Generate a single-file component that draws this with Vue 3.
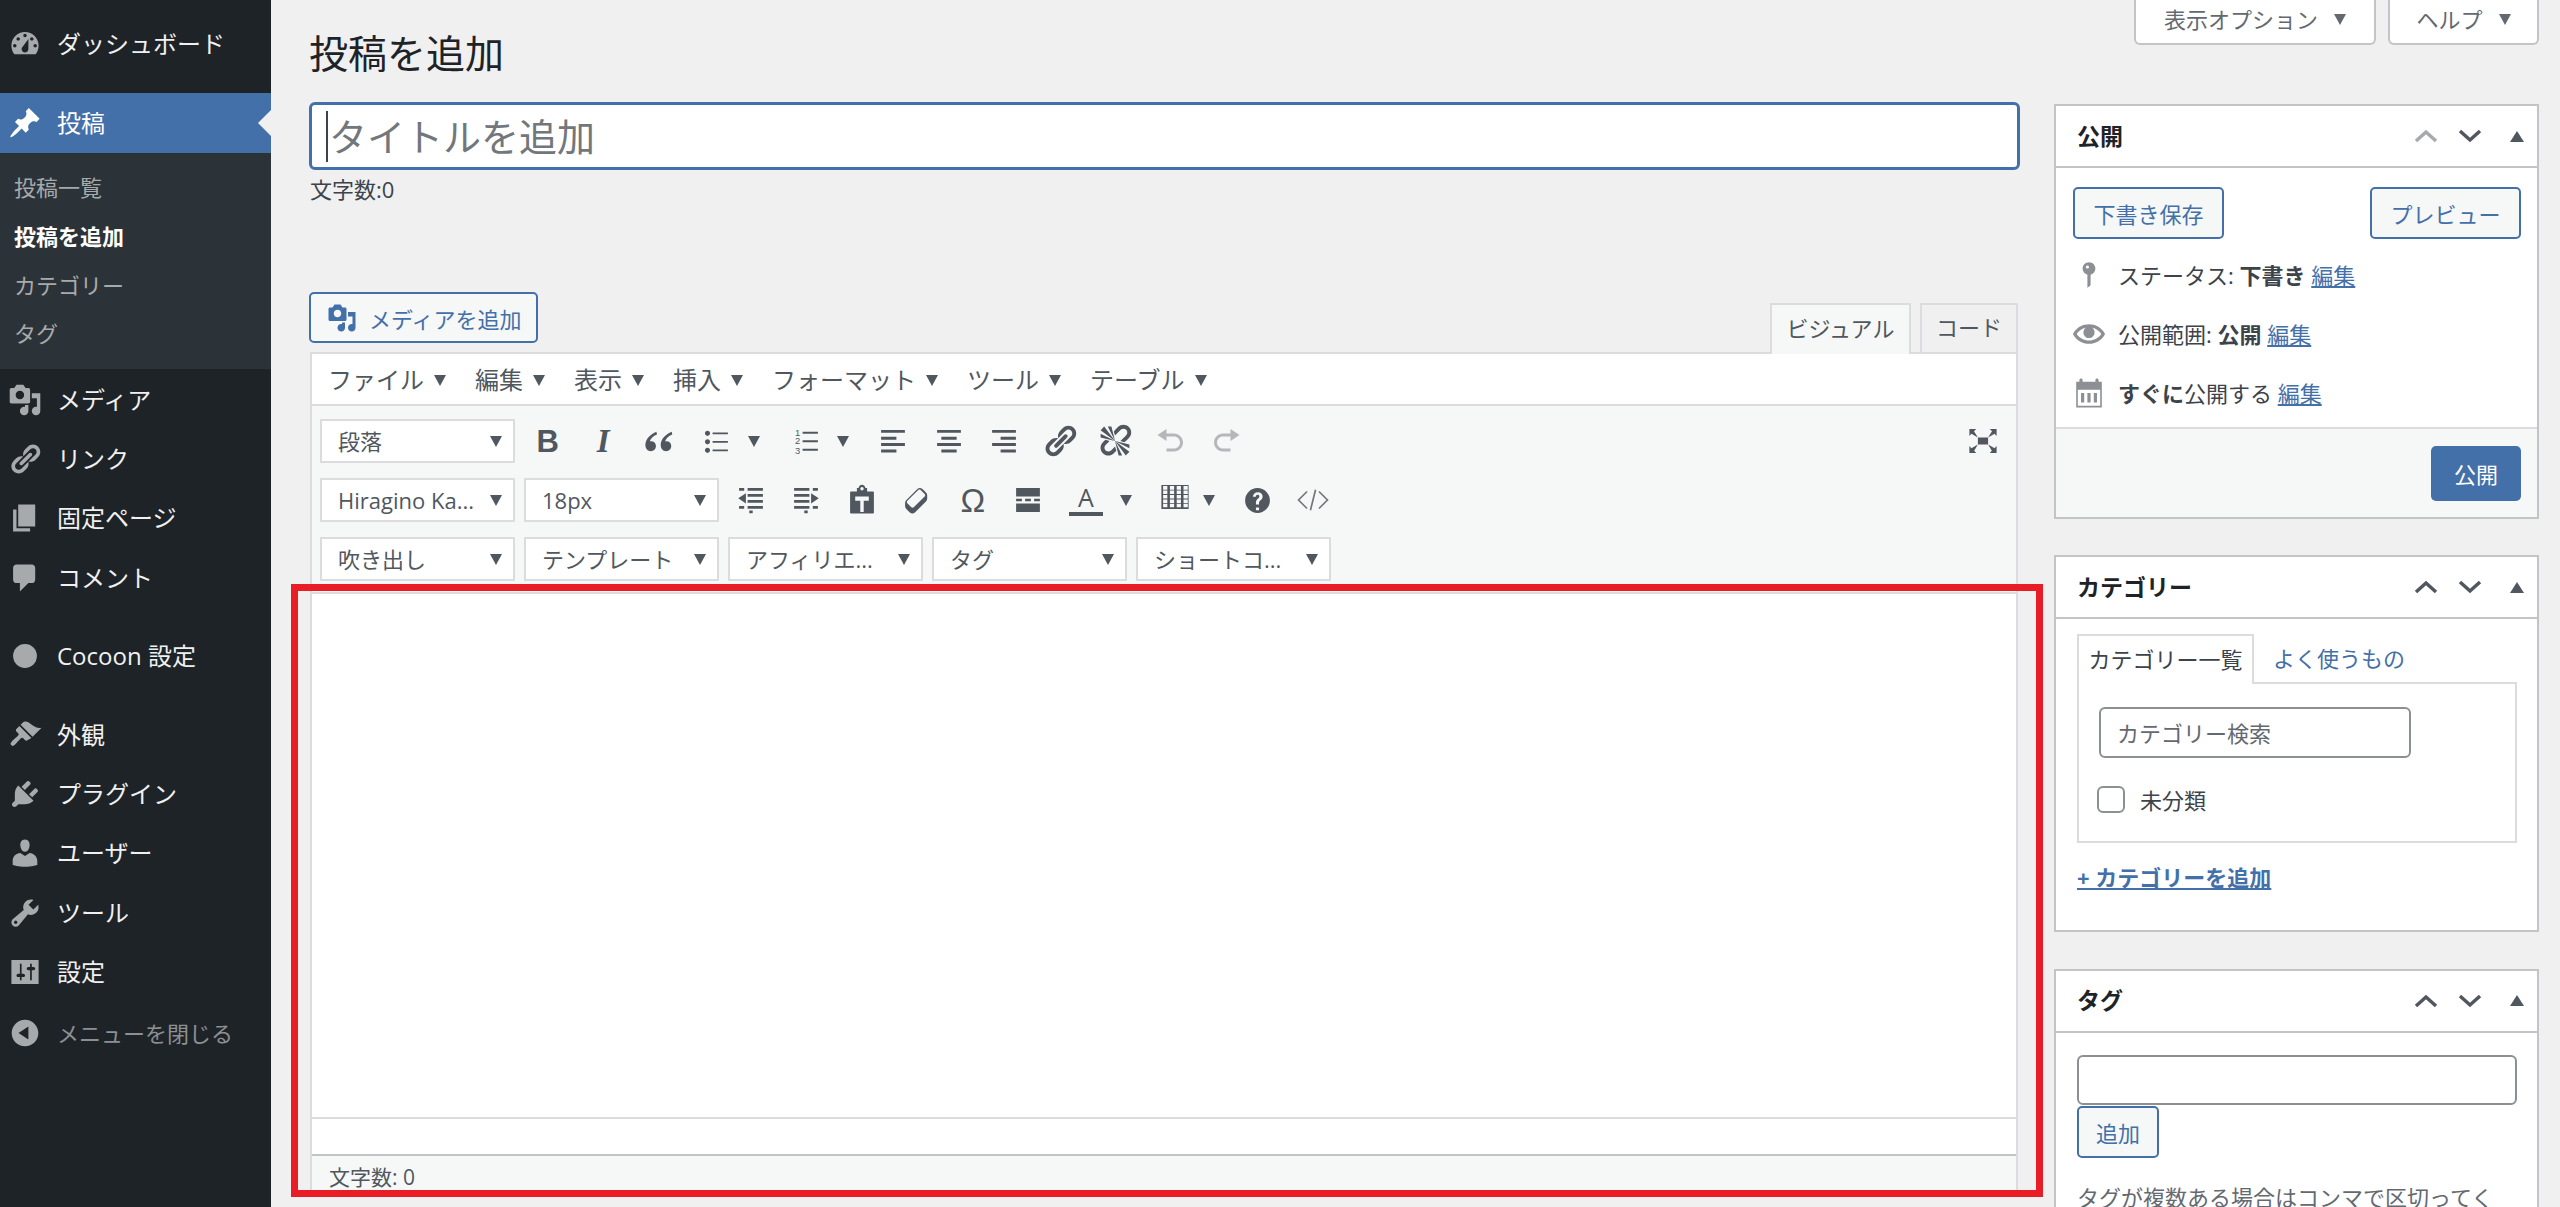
<script setup>
const icons = {
  dashboard: 'M3.76 16h12.48c1.1-1.37 1.76-3.11 1.76-5 0-4.42-3.58-8-8-8s-8 3.58-8 8c0 1.89.66 3.63 1.76 5zM10 4c.55 0 1 .45 1 1s-.45 1-1 1-1-.45-1-1 .45-1 1-1zM6 6c.55 0 1 .45 1 1s-.45 1-1 1-1-.45-1-1 .45-1 1-1zm8 0c.55 0 1 .45 1 1s-.45 1-1 1-1-.45-1-1 .45-1 1-1zm-5.37 5.55L12 7v6c0 1.1-.9 2-2 2s-2-.9-2-2c0-.57.24-1.08.63-1.45zM4 10c.55 0 1 .45 1 1s-.45 1-1 1-1-.45-1-1 .45-1 1-1zm12 0c.55 0 1 .45 1 1s-.45 1-1 1-1-.45-1-1 .45-1 1-1z',
  pin: 'M10.44 3.02l1.82-1.82 6.36 6.35-1.83 1.82c-1.05-.68-2.48-.57-3.41.36l-.75.75c-.92.93-1.04 2.35-.35 3.41l-1.83 1.82-2.41-2.41-2.8 2.79c-.42.42-3.38 2.71-3.8 2.29s1.86-3.39 2.28-3.81l2.79-2.79L4.1 9.36l1.83-1.82c1.05.69 2.48.57 3.4-.36l.75-.75c.93-.92 1.05-2.35.36-3.41z',
  media: 'M13 11V4c0-.55-.45-1-1-1h-1.67L9 1H5L3.67 3H2c-.55 0-1 .45-1 1v7c0 .55.45 1 1 1h10c.55 0 1-.45 1-1zM7 4.5c1.38 0 2.5 1.12 2.5 2.5S8.38 9.5 7 9.5 4.5 8.38 4.5 7 5.62 4.5 7 4.5zM14 6h5v10.5c0 1.38-1.12 2.5-2.5 2.5S14 17.88 14 16.5s1.12-2.5 2.5-2.5c.17 0 .34.02.5.05V9h-3V6zm-4 8.05V13h2v3.5c0 1.38-1.12 2.5-2.5 2.5S7 17.88 7 16.5 8.12 14 9.5 14c.17 0 .34.02.5.05z',
  link: 'M17.74 2.76c1.68 1.69 1.68 4.41 0 6.1l-1.53 1.52c-1.12 1.12-2.7 1.47-4.14 1.09l2.62-2.61.76-.77.76-.76c.84-.84.84-2.2 0-3.04-.84-.85-2.2-.85-3.04 0l-.77.76-3.38 3.38c-.37-1.44-.02-3.02 1.1-4.14l1.52-1.53c1.69-1.68 4.42-1.68 6.1 0zM8.59 13.43l5.34-5.34c.42-.42.42-1.1 0-1.52-.44-.43-1.13-.39-1.53 0l-5.33 5.34c-.42.42-.42 1.1 0 1.52.44.43 1.13.39 1.52 0zm-.76 2.29l4.14-4.15c.38 1.44.03 3.02-1.09 4.14l-1.52 1.53c-1.69 1.68-4.41 1.68-6.1 0-1.68-1.68-1.68-4.42 0-6.1l1.53-1.52c1.12-1.12 2.7-1.47 4.14-1.1l-4.14 4.15c-.85.84-.85 2.2 0 3.05.84.84 2.2.84 3.04 0z',
  page: 'M6 15V2h10v13H6zm-1 1h8v2H3V5h2v11z',
  comment: 'M5 2h9c1.1 0 2 .9 2 2v7c0 1.1-.9 2-2 2h-2l-5 5v-5H5c-1.1 0-2-.9-2-2V4c0-1.1.9-2 2-2z',
  circle: 'M10 3a7 7 0 1 0 0 14a7 7 0 1 0 0-14z',
  brush: 'M14.48 11.06L7.41 3.99l1.5-1.5c.5-.56 2.3-.47 3.51.32 1.21.8 1.43 1.28 2.91 2.1 1.18.64 2.45 1.26 4.45.85zm-.71.71L6.7 4.7 4.93 6.47c-.39.39-.39 1.02 0 1.41l1.06 1.06c.39.39.39 1.03 0 1.42-.6.6-3.01 2.7-3.71 3.4-1 1-.9 1.6-.3 2.2.6.6 1.2.7 2.2-.3.7-.7 2.8-3.1 3.4-3.7.39-.39 1.03-.39 1.42 0l1.06 1.06c.39.39 1.02.39 1.41 0z',
  plugin: 'M13.11 4.36L9.87 7.6 8 5.73l3.24-3.24c.35-.34 1.05-.2 1.56.32.52.51.66 1.21.31 1.55zm-8 1.77l.91-1.12 9.01 9.01-1.19.84c-.71.71-2.63 1.16-3.82 1.16H6.14L4.9 17.26c-.59.59-1.54.59-2.12 0-.59-.58-.59-1.53 0-2.12l1.24-1.24v-3.88c0-1.13.4-3.19 1.09-3.89zm7.26 3.97l3.24-3.24c.34-.35 1.04-.21 1.55.31.52.51.66 1.21.31 1.55l-3.24 3.25z',
  user: 'M10 9.25c-2.27 0-2.73-3.44-2.73-3.44C7 4.02 7.82 2 9.97 2c2.16 0 2.98 2.02 2.71 3.81 0 0-.41 3.44-2.68 3.44zm0 2.57L12.72 10c2.39 0 4.52 2.33 4.52 4.53v2.49s-3.65 1.13-7.24 1.13c-3.65 0-7.24-1.13-7.24-1.13v-2.49c0-2.25 1.94-4.48 4.47-4.48z',
  tool: 'M16.68 9.77c-1.34 1.34-3.3 1.67-4.95.99l-5.41 6.52c-.99.99-2.59.99-3.58 0s-.99-2.59 0-3.57l6.52-5.42c-.68-1.65-.35-3.61.99-4.95 1.28-1.28 3.12-1.62 4.72-1.06l-2.89 2.89 2.82 2.82 2.86-2.87c.53 1.58.18 3.39-1.08 4.65zM3.81 16.21c.4.39 1.04.39 1.43 0 .4-.4.4-1.04 0-1.43-.39-.4-1.03-.4-1.43 0-.39.39-.39 1.03 0 1.43z',
  settings: 'M18 3H2v14h16V3zM8 11h1c.55 0 1 .45 1 1s-.45 1-1 1H8v1.5c0 .28-.22.5-.5.5s-.5-.22-.5-.5V13H6c-.55 0-1-.45-1-1s.45-1 1-1h1V5.5c0-.28.22-.5.5-.5s.5.22.5.5V11zm5-2h-1c-.55 0-1-.45-1-1s.45-1 1-1h1V5.5c0-.28.22-.5.5-.5s.5.22.5.5V7h1c.55 0 1 .45 1 1s-.45 1-1 1h-1v5.5c0 .28-.22.5-.5.5s-.5-.22-.5-.5V9z',
  collapse: 'M10 2.16c4.33 0 7.84 3.51 7.84 7.84s-3.51 7.84-7.84 7.84S2.16 14.33 2.16 10 5.71 2.16 10 2.16zm2 11.72V6.12L6.18 9.97z',
  ul: 'M5 7C4.17 7 3.5 6.33 3.5 5.5 3.5 4.68 4.17 4 5 4c.82 0 1.5.68 1.5 1.5C6.5 6.33 5.82 7 5 7zM8 5h9v1H8V5zm-3 7c-.83 0-1.5-.67-1.5-1.5C3.5 9.68 4.17 9 5 9c.82 0 1.5.68 1.5 1.5 0 .83-.68 1.5-1.5 1.5zM8 10h9v1H8v-1zm-3 7c-.83 0-1.5-.67-1.5-1.5 0-.82.67-1.5 1.5-1.5.82 0 1.5.68 1.5 1.5 0 .83-.68 1.5-1.5 1.5zM8 15h9v1H8v-1z',
  alignLeft: 'M3 3.500h14v1.700H3zM3 7.500h9v1.700H3zM3 11.200h14v1.700H3zM3 15h9v1.700H3z',
  alignCenter: 'M3 3.500h14v1.700H3zM5.500 7.500h9v1.700h-9zM3 11.200h14v1.700H3zM5.500 15h9v1.700h-9z',
  alignRight: 'M3 3.500h14v1.700H3zM8 7.500h9v1.700H8zM3 11.200h14v1.700H3zM8 15h9v1.700H8z',
  unlink: 'M17.74 2.26c1.68 1.69 1.68 4.41 0 6.1l-1.53 1.52c-.32.33-.69.58-1.08.77L13 10l1.69-1.64.76-.77.76-.76c.84-.84.84-2.2 0-3.04-.84-.85-2.2-.85-3.04 0l-.77.76-.76.76L10 7l-.65-2.14c.19-.38.44-.75.77-1.07l1.52-1.53c1.69-1.68 4.42-1.68 6.1 0zM2 4l8 6-6-8zm4-2l4 8-2-8H6zM2 6l8 4-8-2V6zm7.36 7.69L10 13l.74 2.35-1.38 1.39c-1.69 1.68-4.41 1.68-6.1 0-1.68-1.68-1.68-4.42 0-6.1l1.39-1.38L7 10l-.69.64-1.52 1.53c-.85.84-.85 2.2 0 3.04.84.85 2.2.85 3.04 0zM18 16l-8-6 6 8zm-4 2l-4-8 2 8h2zm4-4l-8-4 8 2v2z',
  undo: 'M12 5H7V2L1 6l6 4V7h5c2.2 0 4 1.8 4 4s-1.8 4-4 4H7v2h5c3.3 0 6-2.7 6-6s-2.7-6-6-6z',
  redo: 'M8 5h5V2l6 4-6 4V7H8c-2.2 0-4 1.8-4 4s1.8 4 4 4h5v2H8c-3.3 0-6-2.7-6-6s2.7-6 6-6z',
  expand: 'M7 8h6v4H7zm-5 5v4h4l-1.2-1.2L7 12l-3.8 2.2M14 17h4v-4l-1.2 1.2L13 12l2.2 3.8M14 3l1.3 1.3L13 8l3.8-2.2L18 7V3M6 3H2v4l1.2-1.2L7 8 4.7 4.3',
  quote: 'M8.5 4.5C5 6 2 8.8 2 12.2 2 14.6 3.4 16 5.2 16c1.7 0 3-1.3 3-3s-1.2-2.8-2.8-2.8c-.3 0-.6 0-.8.1.3-1.6 2-3.2 4.2-4.1zm9 0C14 6 11 8.8 11 12.2c0 2.4 1.4 3.8 3.2 3.8 1.7 0 3-1.3 3-3s-1.2-2.8-2.8-2.8c-.3 0-.6 0-.8.1.3-1.6 2-3.2 4.2-4.1z',
  outdent: 'M8 3h9v1.6H8zM3 3h3v1.6H3zM8 6.500h9v1.600H8zM8 10h9v1.6H8zM8 13.500h9v1.600H8zM3 13.500h3v1.600H3zM9 16.200h2v1.600H9zM7 6v6L2.500 9z',
  indent: 'M3 3h9v1.6H3zM14 3h3v1.6h-3zM3 6.500h9v1.600H3zM3 10h9v1.6H3zM3 13.500h9v1.600H3zM14 13.500h3v1.600h-3zM9 16.200h2v1.600H9zM13 6v6l4.500-3z',
  paste: 'M7 3h1c.1-1.2.9-2 2-2s1.9.8 2 2h1v2h3.5c.3 0 .5.2.5.5v12c0 .3-.2.5-.5.5h-13c-.3 0-.5-.2-.5-.5v-12c0-.3.2-.5.5-.5H7V3zm3-.6a1 1 0 1 0 0 2 1 1 0 1 0 0-2zM6 8v2.4h3V17h2v-6.6h3V8H6z',
  eraser: 'M14.29 4.59l1.1 1.11c.41.4.61.94.61 1.47v2.12c0 .53-.2 1.07-.61 1.47l-6.63 6.63c-.4.41-.94.61-1.47.61s-1.07-.2-1.47-.61l-1.11-1.1-1.1-1.11c-.41-.4-.61-.94-.61-1.47v-2.12c0-.54.2-1.07.61-1.48l6.63-6.62c.4-.41.94-.61 1.47-.61s1.06.2 1.47.61zm-6.21 9.7l6.42-6.42c.39-.39.39-1.03 0-1.43L12.16 4.1c-.39-.39-1.03-.39-1.42 0L4.32 10.51c-.39.39-.39 1.04 0 1.43l2.34 2.35c.39.39 1.03.39 1.42 0z',
  more: 'M3 3h14v5H3zM3 9.200h3.400v1.600H3zM8.300 9.200h3.400v1.600H8.300zM13.600 9.200H17v1.600h-3.400zM3 12h14v5H3z',
  help: 'M10 2a8 8 0 1 0 0 16a8 8 0 1 0 0-16zM11 14.500v1.800H9v-1.800zM7 7.600C7.200 5.800 8.400 4.600 10.200 4.600c1.900 0 3.100 1.100 3.100 2.800 0 1.200-.6 1.900-1.500 2.600-.6.5-.8.9-.8 1.700v.8H9v-1c0-1.200.4-1.900 1.200-2.600.6-.5 1-.9 1-1.500 0-.7-.4-1.100-1.100-1.100-.8 0-1.100.5-1.200 1.300z',
  status: 'M14 6c0 1.86-1.28 3.41-3 3.86V16c0 1-2 2-2 2V9.86c-1.72-.45-3-2-3-3.86 0-2.21 1.79-4 4-4s4 1.79 4 4zM8 5c0 .55.45 1 1 1s1-.45 1-1-.45-1-1-1-1 .45-1 1z',
  eye: 'M19.7 9.4C17.7 6 14 3.9 10 3.9S2.3 6 .3 9.4L0 10l.3.6c2 3.4 5.7 5.5 9.7 5.5s7.7-2.1 9.7-5.5l.3-.6-.3-.6zM10 14.1c-3.1 0-6-1.6-7.7-4.1C3.6 8 5.7 6.6 8 6.1c-.9.6-1.5 1.7-1.5 2.9 0 1.9 1.6 3.5 3.5 3.5s3.5-1.6 3.5-3.5c0-1.2-.6-2.3-1.5-2.9 2.3.5 4.4 1.9 5.7 3.9-1.7 2.5-4.6 4.1-7.7 4.1z',
  calendar: 'M2 3h2V2c0-.6.4-1 1-1s1 .4 1 1v1h8V2c0-.6.4-1 1-1s1 .4 1 1v1h2v16H2V3zm1 5v10h14V8H3zm2 2h2v6H5zm4 0h2v6H9zm4 0h2v6h-2z',
}

// 4 columns by 5 rows, the cells are cut out of a filled frame
let tableD = 'M2 3h16v14H2z'
for (const x of [3, 7, 11, 15]) {
  for (const y of [3.6, 6.2, 8.8, 11.4, 14]) {
    tableD += `M${x} ${y}h2.500v2.100h-2.500z`
  }
}
icons.table = tableD

const menuTop = [
  { icon: 'media', label: 'メディア' },
  { icon: 'link', label: 'リンク' },
  { icon: 'page', label: '固定ページ' },
  { icon: 'comment', label: 'コメント' },
]
const menuBottom = [
  { icon: 'brush', label: '外観' },
  { icon: 'plugin', label: 'プラグイン' },
  { icon: 'user', label: 'ユーザー' },
  { icon: 'tool', label: 'ツール' },
  { icon: 'settings', label: '設定' },
]
const subMenu = ['投稿一覧', '投稿を追加', 'カテゴリー', 'タグ']
const menuBar = ['ファイル', '編集', '表示', '挿入', 'フォーマット', 'ツール', 'テーブル']
const row3 = ['吹き出し', 'テンプレート', 'アフィリエ...', 'タグ', 'ショートコ...']
const alignBtns = ['alignLeft', 'alignCenter', 'alignRight']
const row2Btns = ['outdent', 'indent', 'paste', 'eraser']
</script>

<template>
  <div class="page">
    <aside class="sidebar">
      <a class="menu-row dash">
        <svg class="menu-icon" viewBox="0 0 20 20"><path fill-rule="evenodd" :d="icons.dashboard" /></svg>
        <span>ダッシュボード</span>
      </a>
      <a class="menu-row current">
        <svg class="menu-icon" viewBox="0 0 20 20"><path :d="icons.pin" /></svg>
        <span>投稿</span>
      </a>
      <ul class="submenu">
        <li v-for="(s, i) in subMenu" :key="s" :class="{ on: i === 1 }">{{ s }}</li>
      </ul>
      <a v-for="m in menuTop" :key="m.label" class="menu-row">
        <svg class="menu-icon" viewBox="0 0 20 20"><path fill-rule="evenodd" :d="icons[m.icon]" /></svg>
        <span>{{ m.label }}</span>
      </a>
      <a class="menu-row cocoon">
        <svg class="menu-icon" viewBox="0 0 20 20"><path :d="icons.circle" /></svg>
        <span>Cocoon 設定</span>
      </a>
      <div class="sep"></div>
      <a v-for="m in menuBottom" :key="m.label" class="menu-row">
        <svg class="menu-icon" viewBox="0 0 20 20"><path fill-rule="evenodd" :d="icons[m.icon]" /></svg>
        <span>{{ m.label }}</span>
      </a>
      <a class="menu-row close">
        <svg class="menu-icon" viewBox="0 0 20 20"><path fill-rule="evenodd" :d="icons.collapse" /></svg>
        <span>メニューを閉じる</span>
      </a>
    </aside>

    <main class="main">
      <h1>投稿を追加</h1>
      <div class="title-input">
        <i class="cursor"></i>
        <span>タイトルを追加</span>
      </div>
      <div class="title-count">文字数:0</div>

      <div class="media-row">
        <button class="media-btn">
          <svg viewBox="0 0 20 20"><path fill-rule="evenodd" :d="icons.media" /></svg>
          メディアを追加
        </button>
        <div class="mode-tabs">
          <div class="mode on">ビジュアル</div>
          <div class="mode">コード</div>
        </div>
      </div>

      <section class="editor">
        <div class="menubar">
          <div v-for="m in menuBar" :key="m" class="mb-item">{{ m }}<i class="caret"></i></div>
        </div>
        <div class="toolbar">
          <div class="tb-row">
            <div class="sel">段落<i class="caret"></i></div>
            <div class="btns first">
              <span class="tb bold">B</span>
              <span class="tb ital">I</span>
              <span class="tb"><svg viewBox="0 0 20 20"><path :d="icons.quote" /></svg></span>
              <span class="tb wide"><svg viewBox="0 0 20 20"><path :d="icons.ul" /></svg><i class="caret"></i></span>
              <span class="tb wide">
                <svg viewBox="0 0 20 20">
                  <path d="M8 4.500h9v1.200H8zM8 9.500h9v1.200H8zM8 14.500h9v1.200H8z" />
                  <text x="3.500" y="7" class="nums">1</text><text x="3.500" y="12" class="nums">2</text><text x="3.500" y="17.500" class="nums">3</text>
                </svg>
                <i class="caret"></i>
              </span>
              <span v-for="a in alignBtns" :key="a" class="tb"><svg viewBox="0 0 20 20"><path :d="icons[a]" /></svg></span>
              <span class="tb"><svg class="big" viewBox="0 0 20 20"><path fill-rule="evenodd" :d="icons.link" /></svg></span>
              <span class="tb"><svg class="big" viewBox="0 0 20 20"><path :d="icons.unlink" /></svg></span>
              <span class="tb off"><svg viewBox="0 0 20 20"><path :d="icons.undo" /></svg></span>
              <span class="tb off"><svg viewBox="0 0 20 20"><path :d="icons.redo" /></svg></span>
            </div>
            <span class="tb full"><svg viewBox="0 0 20 20"><path :d="icons.expand" /></svg></span>
          </div>
          <div class="tb-row">
            <div class="sel latin">Hiragino Ka...<i class="caret"></i></div>
            <div class="sel latin">18px<i class="caret"></i></div>
            <div class="btns">
              <span v-for="b in row2Btns" :key="b" class="tb"><svg viewBox="0 0 20 20"><path fill-rule="evenodd" :d="icons[b]" /></svg></span>
              <span class="tb omega">Ω</span>
              <span class="tb"><svg viewBox="0 0 20 20"><path :d="icons.more" /></svg></span>
              <span class="tb wide col"><span class="color-a">A</span><i class="caret"></i></span>
              <span class="tb wide tbl"><svg viewBox="0 0 20 20"><path fill-rule="evenodd" :d="icons.table" /></svg><i class="caret"></i></span>
              <span class="tb help"><svg viewBox="0 0 20 20"><path fill-rule="evenodd" :d="icons.help" /></svg></span>
              <span class="tb code"><svg viewBox="0 0 20 20"><path d="M6.500 5L1.500 10l5 5M13.500 5l5 5-5 5M11.500 4L8.500 16" /></svg></span>
            </div>
          </div>
          <div class="tb-row">
            <div v-for="s in row3" :key="s" class="sel">{{ s }}<i class="caret"></i></div>
          </div>
        </div>
        <div class="edit-area"></div>
        <div class="path-row"></div>
        <div class="status">文字数: 0</div>
      </section>
    </main>

    <aside class="side">
      <div class="screen-meta">
        <div class="meta-tab">表示オプション<i class="caret"></i></div>
        <div class="meta-tab">ヘルプ<i class="caret"></i></div>
      </div>

      <section class="box">
        <header class="box-head">
          <h2>公開</h2>
          <svg class="chev up light" viewBox="0 0 24 14"><path d="M2 12L12 3l10 9" /></svg>
          <svg class="chev" viewBox="0 0 24 14"><path d="M2 2l10 9 10-9" /></svg>
          <i class="tri"></i>
        </header>
        <div class="pub-actions">
          <button class="btn">下書き保存</button>
          <button class="btn">プレビュー</button>
        </div>
        <div class="pub-row">
          <svg viewBox="0 0 20 20"><path fill-rule="evenodd" :d="icons.status" /></svg>
          <span>ステータス: <b>下書き</b> <a>編集</a></span>
        </div>
        <div class="pub-row">
          <svg viewBox="0 0 20 20"><path :d="icons.eye" /></svg>
          <span>公開範囲: <b>公開</b> <a>編集</a></span>
        </div>
        <div class="pub-row">
          <svg viewBox="0 0 20 20"><path fill-rule="evenodd" :d="icons.calendar" /></svg>
          <span><b>すぐに</b>公開する <a>編集</a></span>
        </div>
        <footer class="pub-foot">
          <button class="btn-primary">公開</button>
        </footer>
      </section>

      <section class="box cat">
        <header class="box-head">
          <h2>カテゴリー</h2>
          <svg class="chev up" viewBox="0 0 24 14"><path d="M2 12L12 3l10 9" /></svg>
          <svg class="chev" viewBox="0 0 24 14"><path d="M2 2l10 9 10-9" /></svg>
          <i class="tri"></i>
        </header>
        <div class="cat-body">
          <div class="cat-tabs">
            <div class="cat-tab">カテゴリー一覧</div>
            <a class="cat-tab-link">よく使うもの</a>
          </div>
          <div class="cat-panel">
            <div class="cat-search">カテゴリー検索</div>
            <label class="cat-check"><i class="check"></i>未分類</label>
          </div>
          <a class="cat-add">+ カテゴリーを追加</a>
        </div>
      </section>

      <section class="box tag">
        <header class="box-head">
          <h2>タグ</h2>
          <svg class="chev up" viewBox="0 0 24 14"><path d="M2 12L12 3l10 9" /></svg>
          <svg class="chev" viewBox="0 0 24 14"><path d="M2 2l10 9 10-9" /></svg>
          <i class="tri"></i>
        </header>
        <div class="tag-body">
          <div class="tag-input"></div>
          <button class="btn tag-btn">追加</button>
          <p>タグが複数ある場合はコンマで区切ってく</p>
        </div>
      </section>
    </aside>

    <div class="red-frame"></div>
  </div>
</template>

<style scoped>
* {
  box-sizing: border-box;
}
.page {
  position: relative;
  display: flex;
  width: 2560px;
  height: 1207px;
  overflow: hidden;
  background: #f0f0f1;
  color: #3c434a;
  font-family: "Open Sans", "Noto Sans CJK JP", sans-serif;
  font-size: 22px;
  line-height: 1;
}
i {
  font-style: normal;
}
h1, h2, p, ul {
  margin: 0;
  padding: 0;
}
button {
  font-family: inherit;
  cursor: pointer;
}

/* sidebar */
.sidebar {
  flex: 0 0 271px;
  background: #1d2327;
  padding-top: 14px;
  color: #f0f0f1;
  font-size: 24px;
}
.menu-row {
  position: relative;
  display: flex;
  align-items: center;
  height: 59.3px;
}
.menu-icon {
  width: 34px;
  height: 34px;
  margin: 0 15px 0 8px;
  fill: #a7aaad;
  flex: none;
}
.dash {
  margin-bottom: 19px;
  height: 60px;
}
.current {
  height: 60px;
  background: #4470a9;
  color: #fff;
}
.current .menu-icon {
  fill: #fff;
}
.current::after {
  content: "";
  position: absolute;
  right: 0;
  top: 17px;
  border: 13px solid transparent;
  border-right-color: #f0f0f1;
  border-left: 0;
}
.submenu {
  list-style: none;
  height: 216px;
  margin-bottom: 1px;
  padding-top: 10px;
  background: #2c3338;
  color: #a7aaad;
  font-size: 22px;
}
.submenu li {
  display: flex;
  align-items: center;
  height: 48.7px;
  padding-left: 14px;
}
.submenu li.on {
  color: #fff;
  font-weight: 700;
}
.cocoon {
  margin-top: 19.5px;
}
.sep {
  height: 19px;
}
.close {
  margin-top: 2px;
  color: #8c8f94;
  font-size: 22px;
}

/* main column */
.main {
  flex: 0 0 1749px;
  padding-left: 38px;
}
h1 {
  padding-top: 30px;
  margin-bottom: 26px;
  font-size: 39px;
  font-weight: 400;
  line-height: 46px;
  color: #1d2327;
}
.title-input {
  display: flex;
  align-items: center;
  height: 68px;
  border: 3px solid #4470a9;
  border-radius: 6px;
  background: #fff;
  padding-left: 14px;
  color: #72777c;
  font-size: 38px;
}
.cursor {
  width: 2px;
  height: 51px;
  margin-right: 1px;
  background: #3c434a;
}
.title-count {
  display: flex;
  align-items: center;
  height: 38px;
  padding-left: 1px;
  font-size: 22px;
}
.media-row {
  display: flex;
  justify-content: space-between;
  height: 60px;
  margin-top: 84px;
  padding-right: 2px;
}
.media-btn {
  display: flex;
  align-items: center;
  gap: 12px;
  width: 229px;
  height: 51px;
  padding: 0 0 0 16px;
  border: 2px solid #4470a9;
  border-radius: 5px;
  background: #f6f7f7;
  color: #4470a9;
  font-size: 22px;
}
.media-btn svg {
  width: 30px;
  height: 30px;
  fill: #4470a9;
}
.mode-tabs {
  display: flex;
  align-self: flex-end;
  gap: 9px;
  height: 49px;
}
.mode {
  display: flex;
  align-items: center;
  justify-content: center;
  width: 98px;
  padding-bottom: 4px;
  border: 2px solid #dcdcde;
  border-bottom: 0;
  color: #50575e;
}
.mode.on {
  width: 141px;
  background: #f6f7f7;
  margin-bottom: -2px;
  position: relative;
}
.editor {
  margin-left: 1px;
  margin-right: 2px;
  border: 2px solid #dcdcde;
  border-bottom: 0;
  height: 842px;
  display: flex;
  flex-direction: column;
}
.menubar {
  display: flex;
  align-items: center;
  gap: 29px;
  height: 52px;
  padding: 2px 0 0 16px;
  background: #fff;
  border-bottom: 2px solid #dcdcde;
  font-size: 24px;
  color: #50575e;
}
.mb-item {
  display: flex;
  align-items: center;
  gap: 10px;
}
.caret {
  flex: none;
  width: 0;
  height: 0;
  border-left: 6.5px solid transparent;
  border-right: 6.5px solid transparent;
  border-top: 11px solid #50575e;
}
.toolbar {
  height: 188px;
  padding: 13px 0 0 8px;
  background: #f6f7f7;
  border-bottom: 2px solid #dcdcde;
  display: flex;
  flex-direction: column;
  gap: 15px;
}
.tb-row {
  display: flex;
  gap: 9px;
  height: 44px;
  padding-right: 5px;
}
.sel {
  position: relative;
  display: flex;
  align-items: center;
  width: 195px;
  padding-left: 16px;
  background: #fff;
  border: 2px solid #dcdcde;
  color: #50575e;
  white-space: nowrap;
}
.sel .caret {
  position: absolute;
  right: 11px;
  top: 15px;
}
.btns {
  display: flex;
  align-items: center;
  margin-left: -5px;
}
.btns.first {
  margin-left: -4px;
}
.tb {
  display: flex;
  align-items: center;
  justify-content: center;
  width: 55.5px;
  height: 44px;
  color: #50575e;
  fill: #50575e;
}
.tb svg {
  flex: none;
  width: 34px;
  height: 34px;
}
.tb svg.big {
  width: 36px;
  height: 36px;
}
.tb.off svg {
  width: 30px;
  height: 30px;
}
.tb.help svg {
  width: 31px;
  height: 31px;
}
.tb.wide {
  width: 89.5px;
  justify-content: flex-start;
  padding-left: 12.5px;
  gap: 14.5px;
}
.tb.col {
  width: 88px;
  padding-left: 13px;
  gap: 16.5px;
}
.tb.tbl {
  width: 86px;
  padding-left: 14px;
  gap: 10.5px;
}
.tbl svg {
  margin-top: -7px;
}
.bold {
  font-family: "Liberation Sans", sans-serif;
  font-weight: 700;
  font-size: 31px;
}
.ital {
  font-family: "Liberation Serif", serif;
  font-weight: 700;
  font-style: italic;
  font-size: 33px;
}
.omega {
  font-family: "Liberation Sans", sans-serif;
  font-size: 33px;
}
.nums {
  font-family: "Liberation Sans", sans-serif;
  font-size: 5.5px;
}
.off {
  fill: #b5b8bb;
}
.full {
  margin-left: auto;
}
.color-a {
  display: block;
  width: 34px;
  padding-bottom: 2px;
  border-bottom: 4px solid #50575e;
  text-align: center;
  font-family: "Open Sans", sans-serif;
  font-size: 25px;
}
.code svg {
  fill: none;
  stroke: #72777c;
  stroke-width: 1;
}
.edit-area {
  height: 525px;
  background: #fff;
  border-bottom: 2px solid #dcdcde;
}
.path-row {
  height: 37px;
  background: #fff;
  border-bottom: 2px solid #c3c4c7;
}
.status {
  flex: 1;
  padding: 11px 0 0 17px;
  background: #f6f7f7;
  font-size: 21px;
  color: #50575e;
}

/* right column */
.side {
  flex: 0 0 485px;
  margin-left: 34px;
}
.screen-meta {
  display: flex;
  justify-content: flex-end;
  gap: 12px;
  height: 45px;
  margin-bottom: 59px;
}
.meta-tab {
  display: flex;
  align-items: center;
  justify-content: center;
  gap: 16px;
  width: 242px;
  padding-bottom: 5px;
  background: #fff;
  border: 2px solid #c3c4c7;
  border-top: 0;
  border-radius: 0 0 6px 6px;
  color: #646970;
}
.meta-tab + .meta-tab {
  width: 151px;
}
.meta-tab .caret {
  border-top-color: #646970;
}
.box {
  background: #fff;
  border: 2px solid #c3c4c7;
  width: 485px;
}
.box-head {
  display: flex;
  align-items: center;
  height: 62px;
  padding: 0 13px 0 21px;
  border-bottom: 2px solid #c3c4c7;
}
.box-head h2 {
  flex: 1;
  font-size: 23px;
  font-weight: 700;
  color: #1d2327;
}
.chev {
  width: 24px;
  height: 14px;
  margin-right: 28px;
  fill: none;
  stroke: #50575e;
  stroke-width: 3.5;
}
.chev.up {
  margin-right: 20px;
}
.chev.light {
  stroke: #a7aaad;
}
.tri {
  width: 0;
  height: 0;
  border-left: 7px solid transparent;
  border-right: 7px solid transparent;
  border-bottom: 11px solid #50575e;
}
.pub-actions {
  display: flex;
  justify-content: space-between;
  padding: 19px 16px 7px 17px;
}
.btn {
  height: 52px;
  width: 151px;
  border: 2px solid #4470a9;
  border-radius: 5px;
  background: #f6f7f7;
  color: #4470a9;
  font-size: 22px;
  padding: 0;
}
.pub-row {
  display: flex;
  align-items: center;
  gap: 13px;
  height: 58.7px;
  padding-left: 17px;
}
.pub-row svg {
  width: 32px;
  height: 32px;
  fill: #8c8f94;
  flex: none;
}
.pub-row a {
  color: #4470a9;
  text-decoration: underline;
}
.pub-foot {
  display: flex;
  justify-content: flex-end;
  height: 90px;
  margin-top: 5px;
  padding: 16.5px 16px 0 0;
  background: #f6f7f7;
  border-top: 2px solid #dcdcde;
}
.btn-primary {
  width: 90px;
  height: 55px;
  border: 0;
  border-radius: 5px;
  background: #4470a9;
  color: #fff;
  font-size: 22px;
}
.cat {
  margin-top: 36px;
  height: 377px;
}
.cat-body {
  padding: 15px 20px 0 21px;
}
.cat-tabs {
  display: flex;
  align-items: center;
  gap: 19px;
  height: 48px;
}
.cat-tab {
  position: relative;
  z-index: 1;
  display: flex;
  align-items: center;
  justify-content: center;
  width: 177px;
  height: 50px;
  margin-top: 2px;
  padding-bottom: 3px;
  background: #fff;
  border: 2px solid #dcdcde;
  border-bottom: 0;
}
.cat-tab-link {
  margin-top: -1px;
  color: #4470a9;
}
.cat-panel {
  height: 161px;
  padding: 23px 0 0 20px;
  border: 2px solid #dcdcde;
}
.cat-search {
  display: flex;
  align-items: center;
  width: 312px;
  height: 51px;
  padding-left: 16px;
  border: 2px solid #8c8f94;
  border-radius: 6px;
  color: #646970;
}
.cat-check {
  display: flex;
  align-items: center;
  gap: 15px;
  margin: 28px 0 0 -2px;
}
.check {
  width: 28px;
  height: 27px;
  border: 2px solid #8c8f94;
  border-radius: 6px;
}
.cat-add {
  display: inline-block;
  margin-top: 22px;
  color: #4470a9;
  font-weight: 700;
  text-decoration: underline;
  line-height: 24px;
}
.tag {
  margin-top: 36.5px;
  height: 300px;
}
.tag-body {
  padding: 22px 20px 0 21px;
}
.tag-input {
  height: 50px;
  border: 2px solid #8c8f94;
  border-radius: 6px;
}
.tag-btn {
  display: block;
  width: 82px;
  margin-top: 1px;
}
.tag-body p {
  margin-top: 24px;
  line-height: 30px;
  white-space: nowrap;
  color: #646970;
}
.red-frame {
  position: absolute;
  left: 291px;
  top: 584px;
  width: 1752px;
  height: 613px;
  border: 7px solid #e81d25;
  pointer-events: none;
}
</style>

<style>
body {
  margin: 0;
  overflow: hidden;
}
</style>
